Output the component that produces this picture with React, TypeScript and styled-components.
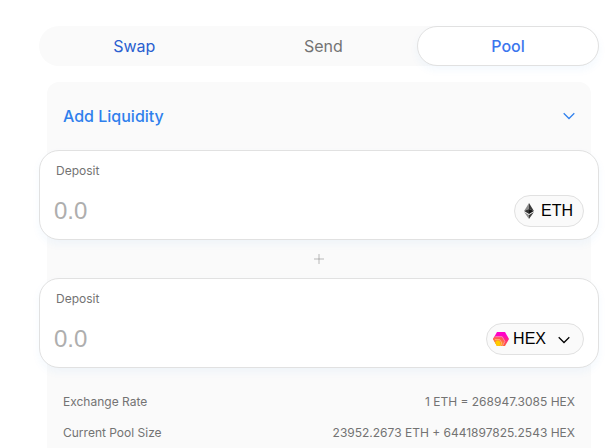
import React, { useState } from "react";
import styled, { createGlobalStyle, css } from "styled-components";

const GlobalStyle = createGlobalStyle`
  *, *::before, *::after { box-sizing: border-box; }
  body {
    margin: 0;
    background: #ffffff;
    color: #737373;
    font-family: Inter, "Liberation Sans", sans-serif;
    font-size: 16px;
  }
  button, input { font: inherit; color: inherit; }
`;

const raised = css`
  border: 1px solid #e1e1e1;
  background: #ffffff;
  box-shadow: 0 4px 8px rgba(47, 128, 237, 0.05);
`;

const Page = styled.main`
  display: flex;
  flex-direction: column;
  gap: 16px;
  min-height: 100vh;
  padding: 26px 12px 0 39px;
`;

const Tabs = styled.nav`
  display: flex;
  height: 40px;
  border-radius: 40px;
  background: #fafafa;
`;

const Tab = styled.button<{ $tone: string; $selected?: boolean }>`
  flex: 1 0 auto;
  padding: 0;
  border: 1px solid transparent;
  border-radius: 40px;
  background: transparent;
  color: ${(p) => p.$tone};
  cursor: pointer;
  ${(p) =>
    p.$selected &&
    css`
      ${raised}
      font-weight: 500;
    `}
`;

const Panel = styled.section`
  display: flex;
  flex: 1;
  flex-direction: column;
  margin: 0 8px;
  border-radius: 12px 12px 0 0;
  background: #fafafa;
`;

const ModeButton = styled.button`
  display: flex;
  align-items: center;
  justify-content: space-between;
  height: 68px;
  padding: 0 16px;
  border: 0;
  background: transparent;
  color: #2f80ed;
  font-weight: 500;
  cursor: pointer;
`;

const Card = styled.div`
  ${raised}
  display: flex;
  flex-direction: column;
  height: 90px;
  margin: 0 -8px;
  padding: 12px 14px;
  border-radius: 20px;
`;

const CardLabel = styled.label`
  padding-left: 2px;
  font-size: 12px;
  line-height: 16px;
`;

const CardRow = styled.div`
  display: flex;
  align-items: center;
  justify-content: space-between;
  padding-top: 16px;
`;

const Amount = styled.input`
  flex: 1;
  min-width: 0;
  height: 32px;
  padding: 0;
  border: 0;
  outline: 0;
  background: transparent;
  color: #2b2b2b;
  font-family: "Liberation Sans", Arial, sans-serif;
  font-size: 24px;
  &::placeholder { color: #aeaeae; opacity: 1; }
`;

const TokenButton = styled.button`
  display: flex;
  align-items: center;
  gap: 4px;
  height: 32px;
  padding: 0 10px 0 6px;
  border: 1px solid #e1e1e1;
  border-radius: 32px;
  background: #fafafa;
  color: #000000;
  font-family: "Liberation Sans", Arial, sans-serif;
  cursor: pointer;
`;

const Caret = styled.span`
  display: flex;
  padding: 2px 3px 0 8px;
`;

const Divider = styled.div`
  display: flex;
  align-items: center;
  justify-content: center;
  height: 38px;
`;

const Summary = styled.dl`
  display: flex;
  flex-direction: column;
  gap: 15px;
  margin: 0;
  padding: 26px 16px 0;
  font-size: 12px;
  line-height: 16px;
`;

const SummaryRow = styled.div`
  display: flex;
  justify-content: space-between;
`;

const Value = styled.dd`
  margin: 0;
`;

const Chevron = ({ color }: { color: string }) => (
  <svg width="12" height="8" viewBox="0 0 12 8" fill="none" aria-hidden="true">
    <path d="M0.7 1.3 6 6.5 11.3 1.3" stroke={color} strokeWidth="1.25" />
  </svg>
);

const Plus = () => (
  <svg width="10" height="10" viewBox="0 0 10 10" aria-hidden="true">
    <path d="M4 0h2v4h4v2H6v4H4V6H0V4h4z" fill="#d9d9d9" />
    <path d="M4 4h2v2H4z" fill="#c0c0c0" />
  </svg>
);

const EthIcon = () => (
  <svg width="16" height="16" viewBox="0 0 16 16" aria-hidden="true">
    <path d="M8 0 3.1 8.1 8 5.9z" fill="#8c8c8c" />
    <path d="M8 0 12.9 8.1 8 5.9z" fill="#393939" />
    <path d="M3.1 8.1 8 5.9V11z" fill="#343434" />
    <path d="M12.9 8.1 8 5.9V11z" fill="#141414" />
    <path d="M3.1 9.1 8 12v4z" fill="#8c8c8c" />
    <path d="M12.9 9.1 8 12v4z" fill="#3c3c3b" />
  </svg>
);

const HexIcon = () => (
  <svg width="16" height="16" viewBox="0 0 16 16" aria-hidden="true">
    <defs>
      <linearGradient id="hexOuter" x1="0.6" y1="0" x2="0.5" y2="1">
        <stop offset="0.2" stopColor="#ff00c8" />
        <stop offset="0.6" stopColor="#ff3070" />
        <stop offset="1" stopColor="#ff6a38" />
      </linearGradient>
      <linearGradient id="hexInner" x1="0.7" y1="0" x2="0.3" y2="1">
        <stop offset="0" stopColor="#ff4668" />
        <stop offset="0.6" stopColor="#ff8a2c" />
        <stop offset="1" stopColor="#ffae18" />
      </linearGradient>
    </defs>
    <path d="M4 1h8l4 7-4 7H4L0 8z" fill="url(#hexOuter)" />
    <path d="M1.3 6H8.8L11.5 10.5 9 15H4L0 8z" fill="url(#hexInner)" />
    <path d="M2.4 5.7H9.2L11.9 10.4 9.6 14.7" fill="none" stroke="#ffc4cc" strokeWidth="0.6" />
    <path d="M1.9 8.6H6.7L8.9 12 7.6 14.7" fill="none" stroke="#ffd49a" strokeWidth="0.6" />
    <path d="M3.5 9.6H6.2L7.8 12.3 6.3 15H4L2.1 12z" fill="#ffcb00" />
  </svg>
);

const tabs = [
  { name: "Swap", tone: "#2a5fd0" },
  { name: "Send", tone: "#737373" },
  { name: "Pool", tone: "#3b76ee" },
];

const summary = [
  ["Exchange Rate", "1 ETH = 268947.3085 HEX"],
  ["Current Pool Size", "23952.2673 ETH + 6441897825.2543 HEX"],
];

type DepositProps = { id: string; children: React.ReactNode };

const Deposit = ({ id, children }: DepositProps) => (
  <Card>
    <CardLabel htmlFor={id}>Deposit</CardLabel>
    <CardRow>
      <Amount id={id} inputMode="decimal" placeholder="0.0" />
      {children}
    </CardRow>
  </Card>
);

export default function App() {
  const [active, setActive] = useState("Pool");
  return (
    <>
      <GlobalStyle />
      <Page>
        <Tabs>
          {tabs.map((t) => (
            <Tab
              key={t.name}
              type="button"
              $tone={t.tone}
              $selected={t.name === active}
              onClick={() => setActive(t.name)}
            >
              {t.name}
            </Tab>
          ))}
        </Tabs>
        <Panel>
          <ModeButton type="button">
            Add Liquidity
            <Chevron color="#2f80ed" />
          </ModeButton>
          <Deposit id="eth-amount">
            <TokenButton type="button">
              <EthIcon />
              ETH
            </TokenButton>
          </Deposit>
          <Divider>
            <Plus />
          </Divider>
          <Deposit id="hex-amount">
            <TokenButton type="button">
              <HexIcon />
              HEX
              <Caret>
                <Chevron color="#000000" />
              </Caret>
            </TokenButton>
          </Deposit>
          <Summary>
            {summary.map(([term, value]) => (
              <SummaryRow key={term}>
                <dt>{term}</dt>
                <Value>{value}</Value>
              </SummaryRow>
            ))}
          </Summary>
        </Panel>
      </Page>
    </>
  );
}
